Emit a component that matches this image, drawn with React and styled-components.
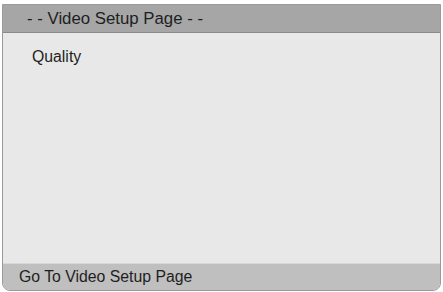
import React from "react"
import styled, { createGlobalStyle } from "styled-components"

const Global = createGlobalStyle`
  html, body {
    margin: 0;
    padding: 0;
    background: #ffffff;
  }
  body {
    font-family: "Liberation Sans", Arial, sans-serif;
  }
`

const Frame = styled.div`
  box-sizing: border-box;
  width: 439px;
  height: 287px;
  margin: 4px 0 0 2px;
  display: flex;
  flex-direction: column;
  background: #e8e8e8;
  border: 1px solid #9a9a9a;
  border-radius: 0 0 8px 8px;
  overflow: hidden;
`

const Header = styled.div`
  height: 27px;
  flex: none;
  display: flex;
  align-items: center;
  padding-left: 24px;
  background: #a6a6a6;
  border-bottom: 1px solid #8a8a8a;
  color: #1e1e1e;
  font-size: 16.8px;
`

const Body = styled.div`
  flex: 1;
  padding: 15px 0 0 29px;
  border-bottom: 1px solid #d8d8d8;
`

const Item = styled.div`
  color: #1e1e1e;
  font-size: 15.8px;
`

const Footer = styled.div`
  height: 26px;
  flex: none;
  display: flex;
  align-items: center;
  padding-left: 16px;
  background: #bfbfbf;
  color: #1e1e1e;
  font-size: 15.8px;
`

export default function App() {
  return (
    <>
      <Global />
      <Frame>
        <Header>- - Video Setup Page - -</Header>
        <Body>
          <Item>Quality</Item>
        </Body>
        <Footer>Go To Video Setup Page</Footer>
      </Frame>
    </>
  )
}
